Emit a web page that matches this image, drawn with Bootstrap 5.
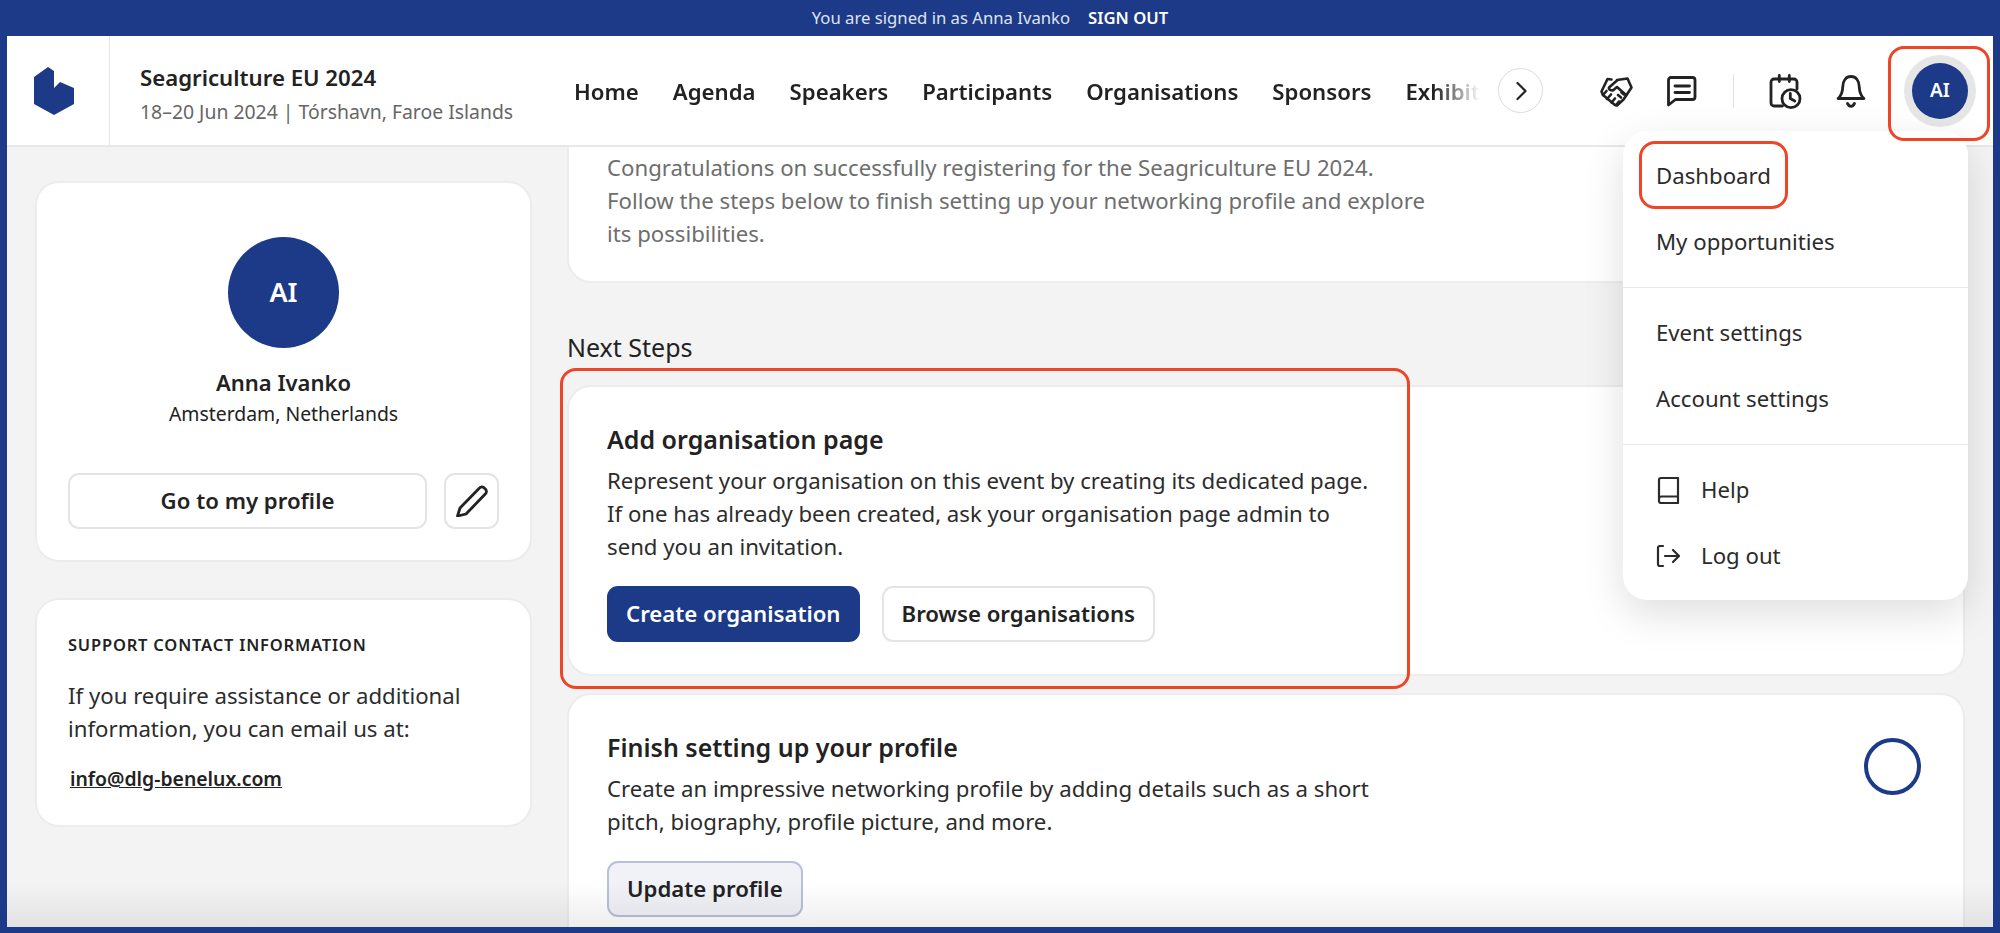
<!DOCTYPE html>
<html lang="en">
<head>
    <meta charset="UTF-8">
    <meta name="viewport" content="width=device-width, initial-scale=1.0">
    <title>Seagriculture EU 2024</title>
    <link href="https://cdn.jsdelivr.net/npm/bootstrap@5.3.0/dist/css/bootstrap.min.css" rel="stylesheet">
    <style>
        body {
            font-family: "Noto Sans", sans-serif;
            color: #222;
            background: #1c3a87;
            height: 100vh;
            overflow: hidden;
            padding: 0 7px 6px;
            position: relative;
        }
        .signin-bar {
            height: 36px;
            padding-right: 20px;
            color: #dfe4f2;
            font-size: 16.7px;
            gap: 18px;
        }
        .signin-bar a {
            color: #fff;
            font-weight: 600;
            text-decoration: none;
        }
        .top-nav {
            height: 111px;
            flex-wrap: nowrap;
            border-bottom: 2px solid #e8e8e8;
            justify-content: flex-start;
        }
        .logo-cell {
            width: 103px;
            height: 100%;
            padding-right: 8px;
            border-right: 1px solid #e6e6e6;
        }
        .event-cell {
            width: 464px;
            padding: 8px 0 0 30px;
        }
        .event-title {
            font-size: 22.2px;
            font-weight: 600;
            line-height: 30px;
        }
        .event-sub {
            font-size: 19.4px;
            line-height: 30px;
            color: #666;
            margin-top: 4px;
            white-space: nowrap;
        }
        .nav-scroll {
            width: 906px;
            margin-top: 2px;
            overflow: hidden;
            gap: 34px;
            -webkit-mask-image: linear-gradient(to right, #000 95%, transparent 100%);
            mask-image: linear-gradient(to right, #000 95%, transparent 100%);
        }
        .nav-scroll .nav-link {
            color: #222;
            font-size: 22.2px;
            font-weight: 600;
            padding: 0;
            white-space: nowrap;
        }
        .round-next {
            width: 45px;
            height: 45px;
            margin-left: 18px;
            border: 1.5px solid #ddd;
            border-radius: 50%;
            background: #fff;
            padding: 0;
            flex: none;
        }
        .nav-ic {
            width: 38px;
            height: 38px;
            flex: none;
        }
        .ic-handshake { margin-left: 53px; }
        .ic-message { margin-left: 29px; }
        .ic-bell { margin-left: 28px; }
        .nav-sep {
            width: 1px;
            height: 34px;
            background: #e2e2e2;
            margin: 0 32px;
            flex: none;
        }
        .me-ring {
            width: 72px;
            height: 72px;
            border-radius: 50%;
            background: #e6e6e6;
            margin-left: 34px;
            flex: none;
            position: relative;
        }
        .me-dot {
            width: 56px;
            height: 56px;
            border-radius: 50%;
            background: #1c3a87;
            color: #fff;
            font-size: 19px;
            font-weight: 600;
        }
        .page-body {
            background: #f3f3f3;
            height: 780px;
            padding: 0 28px;
            gap: 35px;
            overflow: hidden;
        }
        .side-col {
            width: 497px;
            flex: none;
            padding-top: 34px;
        }
        .main-col {
            flex: 1 1 auto;
            min-width: 0;
        }
        .soft-card {
            border: 2px solid #ececec;
            border-radius: 24px;
            background: #fff;
        }
        .profile-card {
            height: 381px;
            padding: 54px 31px 0;
            margin-bottom: 36px;
        }
        .big-avatar {
            width: 111px;
            height: 111px;
            border-radius: 50%;
            background: #1c3a87;
            color: #fff;
            font-size: 27px;
            font-weight: 600;
        }
        .person-name {
            font-size: 22px;
            font-weight: 600;
            line-height: 30px;
            margin-top: 19px;
        }
        .person-place {
            font-size: 19.4px;
            line-height: 30px;
            margin-top: 2px;
        }
        .profile-actions {
            margin-top: 44px;
            gap: 17px;
        }
        .plain-btn {
            height: 56px;
            border: 2px solid #e4e4e4;
            border-radius: 11px;
            background: #fff;
            color: #222;
            font-size: 22.2px;
            font-weight: 600;
            padding: 0 18px;
            white-space: nowrap;
        }
        .plain-btn:hover { border-color: #e4e4e4; color: #222; background: #fff; }
        .edit-btn {
            width: 55px;
            padding: 0;
            flex: none;
        }
        .support-card {
            height: 229px;
            padding: 33px 31px 0;
        }
        .support-head {
            font-size: 16.5px;
            font-weight: 600;
            letter-spacing: .8px;
            line-height: 24px;
            text-transform: uppercase;
            margin-bottom: 22px;
        }
        .body-copy {
            font-size: 22.2px;
            line-height: 33px;
            color: #2c2c2c;
        }
        .support-copy {
            margin-bottom: 19px;
        }
        .support-link {
            font-size: 19.4px;
            font-weight: 600;
            color: #222;
            margin-left: 2px;
        }
        .intro-card {
            height: 136px;
            border-top: 0;
            border-radius: 0 0 24px 24px;
            padding: 4px 38px 0;
        }
        .intro-copy {
            color: #6e6e6e;
            width: 828px;
        }
        .steps-head {
            font-size: 25px;
            line-height: 33px;
            margin: 48px 0 21px;
        }
        .step-card {
            padding: 36px 38px 0;
            position: relative;
        }
        .step-first {
            height: 291px;
            margin-bottom: 17px;
        }
        .step-second {
            height: 300px;
        }
        .step-title {
            font-size: 25px;
            font-weight: 600;
            line-height: 33px;
            margin-bottom: 8px;
        }
        .step-copy {
            width: 778px;
            margin-bottom: 23px;
        }
        .step-actions {
            gap: 22px;
        }
        .blue-btn {
            height: 56px;
            background: #1c3a87;
            border: 0;
            border-radius: 11px;
            color: #fff;
            font-size: 22.2px;
            font-weight: 600;
            padding: 0 19px;
        }
        .blue-btn:hover { background: #1c3a87; color: #fff; }
        .soft-btn {
            background: #f0f2f7;
            border-color: #b8c0da;
        }
        .todo-ring {
            position: absolute;
            top: 43px;
            right: 42px;
            width: 57px;
            height: 57px;
            border: 4px solid #1c3a87;
            border-radius: 50%;
        }
        .user-menu {
            top: 76px;
            right: 8px;
            left: auto;
            width: 345px;
            height: 469px;
            padding: 12px 0;
            border: 0;
            border-radius: 24px;
            box-shadow: 0 14px 40px rgba(0, 0, 0, .13);
        }
        .user-menu .dropdown-item {
            height: 66px;
            font-size: 22.2px;
            color: #2b2b2b;
            padding: 0 33px;
            display: flex;
            align-items: center;
            gap: 21px;
        }
        .user-menu .dropdown-divider {
            margin: 12px 0;
            border-color: #e8e8e8;
        }
        .mark-box {
            position: absolute;
            z-index: 1001;
            border: 3px solid #ee4427;
            border-radius: 16px;
            pointer-events: none;
        }
        .mark-avatar { left: -16px; top: -9px; width: 102px; height: 95px; }
        .mark-dash { left: 16px; top: 10px; width: 149px; height: 68px; }
        .mark-step { left: -9px; top: -19px; width: 850px; height: 321px; }
        .bottom-fade {
            position: absolute;
            left: 7px;
            right: 7px;
            bottom: 6px;
            height: 44px;
            background: linear-gradient(to bottom, rgba(0, 0, 0, 0), rgba(0, 0, 0, .07));
            pointer-events: none;
        }
    </style>
</head>
<body>
    <div class="signin-bar d-flex justify-content-center align-items-center">
        <span>You are signed in as Anna Ivanko</span>
        <a href="#">SIGN OUT</a>
    </div>

    <nav class="navbar top-nav bg-white p-0">
        <div class="logo-cell d-flex align-items-center justify-content-center">
            <svg width="40" height="48" viewBox="35 66 40 48"><path fill="#1c3a87" d="M35 76 49 66l6 4v17l6-6 14 6v16l-20 11-20-11z"/></svg>
        </div>
        <div class="event-cell">
            <div class="event-title">Seagriculture EU 2024</div>
            <div class="event-sub">18–20 Jun 2024 | Tórshavn, Faroe Islands</div>
        </div>
        <div class="nav-scroll d-flex">
            <a class="nav-link" href="#">Home</a>
            <a class="nav-link" href="#">Agenda</a>
            <a class="nav-link" href="#">Speakers</a>
            <a class="nav-link" href="#">Participants</a>
            <a class="nav-link" href="#">Organisations</a>
            <a class="nav-link" href="#">Sponsors</a>
            <a class="nav-link" href="#">Exhibitors</a>
        </div>
        <button class="round-next d-flex align-items-center justify-content-center" type="button">
            <svg width="22" height="22" viewBox="0 0 22 22" fill="none" stroke="#222" stroke-width="2.2" stroke-linecap="round" stroke-linejoin="round"><path d="m7.5 3 8 8-8 8"/></svg>
        </button>
        <!-- handshake -->
        <svg class="nav-ic ic-handshake" viewBox="0 0 38 38" fill="none" stroke="#222" stroke-width="2.6" stroke-linecap="round" stroke-linejoin="round">
            <path d="M15.5 7.5 11.5 7 5.5 19.5 7 23l12 10 2 .5 6.5-6 8-12-4-9-10.5 1.5"/>
            <path d="M21 8.5 13 15.5c-.8 2 2.5 3.5 4.500 2.500l3.500-3 9 8"/>
            <path d="M7 23l3.500-4M11 27l4-4.500M15.500 30.500l3.500-4M20 33l3-3.500M25 25.500l-3-2.500M28 22.500l-2.500-2"/>
        </svg>
        <!-- message -->
        <svg class="nav-ic ic-message" viewBox="0 0 38 38" fill="none" stroke="#222" stroke-width="2.8" stroke-linecap="round" stroke-linejoin="round">
            <path d="M5.5 8A2.5 2.5 0 0 1 8 5.5h21.5A2.5 2.5 0 0 1 32 8v17a2.5 2.5 0 0 1-2.5 2.5H12.5l-7 5.5z"/>
            <path d="M12 14h14.5M12 20.5h14.5"/>
        </svg>
        <span class="nav-sep"></span>
        <!-- calendar with clock -->
        <svg class="nav-ic" viewBox="0 0 38 38" fill="none" stroke="#222" stroke-width="2.8" stroke-linecap="round" stroke-linejoin="round">
            <path d="M16.5 34H8a3 3 0 0 1-3-3V10a3 3 0 0 1 3-3h20a3 3 0 0 1 3 3v7"/>
            <path d="M13.3 3.5V9.5M23.3 3.5V9.5"/>
            <circle cx="25" cy="26.7" r="9"/>
            <path d="M24.3 21.5v5l4.5 2.500"/>
        </svg>
        <!-- bell -->
        <svg class="nav-ic ic-bell" viewBox="0 0 38 38" fill="none" stroke="#222" stroke-width="2.8" stroke-linecap="round" stroke-linejoin="round">
            <path d="M6 26.5c2.5-2 4.5-5 4.8-12C11 8.500 14 4.500 19 4.500s8 4 8.200 10c.3 7 2.300 10 4.800 12z"/>
            <path d="M15.5 31.5c1 2 2.300 2.800 3.500 2.800s2.500-.8 3.500-2.800"/>
        </svg>
        <div class="me-ring d-flex align-items-center justify-content-center">
            <div class="me-dot d-flex align-items-center justify-content-center">AI</div>
            <span class="mark-box mark-avatar"></span>
            <div class="dropdown-menu show user-menu">
                <a class="dropdown-item" href="#">Dashboard</a>
                <span class="mark-box mark-dash"></span>
                <a class="dropdown-item" href="#">My opportunities</a>
                <hr class="dropdown-divider">
                <a class="dropdown-item" href="#">Event settings</a>
                <a class="dropdown-item" href="#">Account settings</a>
                <hr class="dropdown-divider">
                <a class="dropdown-item" href="#">
                    <svg width="24" height="28" viewBox="0 0 24 28" fill="none" stroke="#2b2b2b" stroke-width="2.2" stroke-linejoin="round"><path d="M3 22V4a2 2 0 0 1 2-2h17v25H5a2 2 0 0 1-2-2zM3 23a2.5 2.5 0 0 1 2.500-2.500H22"/></svg>
                    Help
                </a>
                <a class="dropdown-item" href="#">
                    <svg width="24" height="24" viewBox="0 0 24 24" fill="none" stroke="#2b2b2b" stroke-width="2.2" stroke-linecap="round" stroke-linejoin="round"><path d="M7 2H4a2 2 0 0 0-2 2v16a2 2 0 0 0 2 2h3M9 12h14M17 6l6 6-6 6"/></svg>
                    Log out
                </a>
            </div>
        </div>
    </nav>

    <div class="page-body d-flex">
        <aside class="side-col">
            <div class="soft-card profile-card text-center">
                <div class="big-avatar d-flex align-items-center justify-content-center mx-auto">AI</div>
                <div class="person-name">Anna Ivanko</div>
                <div class="person-place">Amsterdam, Netherlands</div>
                <div class="profile-actions d-flex">
                    <a class="btn plain-btn flex-grow-1 d-flex align-items-center justify-content-center" href="#">Go to my profile</a>
                    <a class="btn plain-btn edit-btn d-flex align-items-center justify-content-center" href="#">
                        <svg width="32" height="32" viewBox="0 0 32 32" fill="none" stroke="#222" stroke-width="2.8" stroke-linejoin="round"><path d="M4 23 23.5 3a3.2 3.2 0 0 1 4.5-.2l1.500 1.500a3.200 3.200 0 0 1 0 4.500L10 29l-8.500 2z"/></svg>
                    </a>
                </div>
            </div>
            <div class="soft-card support-card">
                <div class="support-head">Support contact information</div>
                <p class="body-copy support-copy">If you require assistance or additional information, you can email us at:</p>
                <a class="support-link" href="#">info@dlg-benelux.com</a>
            </div>
        </aside>

        <main class="main-col">
            <div class="soft-card intro-card">
                <p class="body-copy intro-copy mb-0">Congratulations on successfully registering for the Seagriculture EU 2024. Follow the steps below to finish setting up your networking profile and explore its possibilities.</p>
            </div>
            <div class="steps-head">Next Steps</div>
            <div class="soft-card step-card step-first">
                <span class="mark-box mark-step"></span>
                <div class="step-title">Add organisation page</div>
                <p class="body-copy step-copy">Represent your organisation on this event by creating its dedicated page. If one has already been created, ask your organisation page admin to send you an invitation.</p>
                <div class="step-actions d-flex">
                    <a class="btn blue-btn d-flex align-items-center" href="#">Create organisation</a>
                    <a class="btn plain-btn d-flex align-items-center" href="#">Browse organisations</a>
                </div>
            </div>
            <div class="soft-card step-card step-second">
                <span class="todo-ring"></span>
                <div class="step-title">Finish setting up your profile</div>
                <p class="body-copy step-copy">Create an impressive networking profile by adding details such as a short pitch, biography, profile picture, and more.</p>
                <a class="btn plain-btn soft-btn d-inline-flex align-items-center" href="#">Update profile</a>
            </div>
        </main>
    </div>
    <div class="bottom-fade"></div>
</body>
</html>
